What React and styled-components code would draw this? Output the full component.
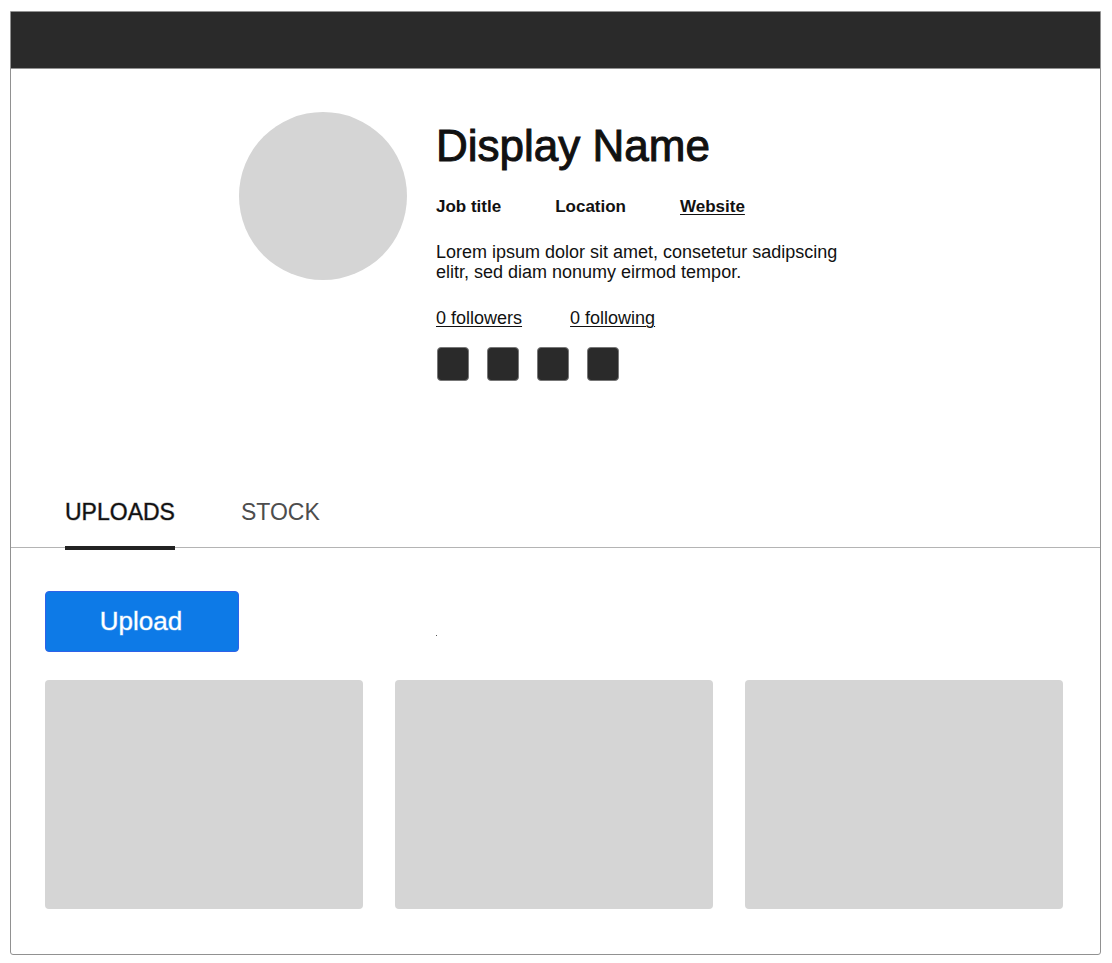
import React, { useState } from "react";
import styled, { createGlobalStyle } from "styled-components";

const GlobalStyle = createGlobalStyle`
  *, *::before, *::after { box-sizing: border-box; }
  body {
    margin: 0;
    background: #fff;
    color: #111;
    font-family: "Liberation Sans", Arial, sans-serif;
  }
  button { font-family: inherit; cursor: pointer; }
`;

const Frame = styled.div`
  margin: 11px 11px 8px 10px;
  border: 1px solid #919191;
  border-radius: 0 0 3px 3px;
`;

const TopBar = styled.header`
  height: 57px;
  background: #2a2a2a;
  border-bottom: 1px solid #919191;
`;

const Profile = styled.section`
  display: flex;
  gap: 29px;
  max-width: 633px;
  margin: 0 auto;
  padding: 43px 0 118px;
`;

const Avatar = styled.div`
  flex: none;
  width: 168px;
  height: 168px;
  border-radius: 50%;
  background: #d5d5d5;
`;

const Details = styled.div`
  flex: 1;
  padding-top: 8px;
`;

const Name = styled.h1`
  margin: 0 0 25px;
  font-size: 44px;
  line-height: 52px;
  font-weight: 400;
  -webkit-text-stroke: 1px #111;
`;

const InfoRow = styled.div`
  display: flex;
  gap: ${(p) => p.$gap};
  font-size: ${(p) => (p.$strong ? "17px" : "18px")};
  font-weight: ${(p) => (p.$strong ? 700 : 400)};
  line-height: 20px;
`;

const TextLink = styled.a`
  color: inherit;
  text-decoration: underline;
  text-underline-offset: 2px;
  text-decoration-thickness: 1px;
`;

const Bio = styled.p`
  max-width: 420px;
  margin: 25px 0 26px;
  font-size: 18px;
  line-height: 20px;
`;

const SocialList = styled.div`
  display: flex;
  gap: 18px;
  margin-top: 19px;
  padding-left: 1px;
`;

const SocialButton = styled.button`
  width: 32px;
  height: 34px;
  padding: 0;
  border: 1px solid #777;
  border-radius: 4px;
  background: #2a2a2a;
`;

const Tabs = styled.nav`
  display: flex;
  gap: 66px;
  padding: 0 54px;
  border-bottom: 1px solid #b4b4b4;
`;

const Tab = styled.button`
  height: 51px;
  margin-bottom: -3px;
  padding: 0 0 21px;
  border: 0;
  border-bottom: 4px solid ${(p) => (p.$active ? "#222" : "transparent")};
  background: none;
  color: ${(p) => (p.$active ? "#111" : "#4d4d4d")};
  font-size: 23px;
  line-height: 26px;
  -webkit-text-stroke: ${(p) => (p.$active ? "1px rgba(17, 17, 17, 0.4)" : "0")};
`;

const Content = styled.main`
  padding: 43px 37px 45px 34px;
`;

const Actions = styled.div`
  display: flex;
  gap: 197px;
  margin-bottom: 28px;
`;

const UploadButton = styled.button`
  width: 194px;
  height: 61px;
  padding: 0 2px 2px 0;
  border: 1px solid #2f62e8;
  border-radius: 4px;
  background: #0d7ae7;
  color: #fff;
  font-size: 26px;
  line-height: 30px;
  -webkit-text-stroke: 1px rgba(255, 255, 255, 0.4);
`;

const Dot = styled.span`
  width: 1px;
  height: 1px;
  margin-top: 44px;
  background: #555;
`;

const Gallery = styled.div`
  display: grid;
  grid-template-columns: repeat(3, 1fr);
  gap: 32px;
`;

const Thumbnail = styled.div`
  aspect-ratio: 318 / 229;
  border-radius: 4px;
  background: #d5d5d5;
`;

const tabs = ["UPLOADS", "STOCK"];

export default function App() {
  const [active, setActive] = useState("UPLOADS");
  return (
    <>
      <GlobalStyle />
      <Frame>
        <TopBar />
        <Profile>
          <Avatar />
          <Details>
            <Name>Display Name</Name>
            <InfoRow $gap="54px" $strong>
              <span>Job title</span>
              <span>Location</span>
              <TextLink href="#website">Website</TextLink>
            </InfoRow>
            <Bio>
              Lorem ipsum dolor sit amet, consetetur sadipscing elitr, sed diam
              nonumy eirmod tempor.
            </Bio>
            <InfoRow $gap="48px">
              <TextLink href="#followers">0 followers</TextLink>
              <TextLink href="#following">0 following</TextLink>
            </InfoRow>
            <SocialList>
              {[1, 2, 3, 4].map((n) => (
                <SocialButton key={n} type="button" aria-label={`Social ${n}`} />
              ))}
            </SocialList>
          </Details>
        </Profile>
        <Tabs>
          {tabs.map((name) => (
            <Tab
              key={name}
              type="button"
              $active={name === active}
              onClick={() => setActive(name)}
            >
              {name}
            </Tab>
          ))}
        </Tabs>
        <Content>
          <Actions>
            <UploadButton type="button">Upload</UploadButton>
            <Dot />
          </Actions>
          <Gallery>
            <Thumbnail />
            <Thumbnail />
            <Thumbnail />
          </Gallery>
        </Content>
      </Frame>
    </>
  );
}
